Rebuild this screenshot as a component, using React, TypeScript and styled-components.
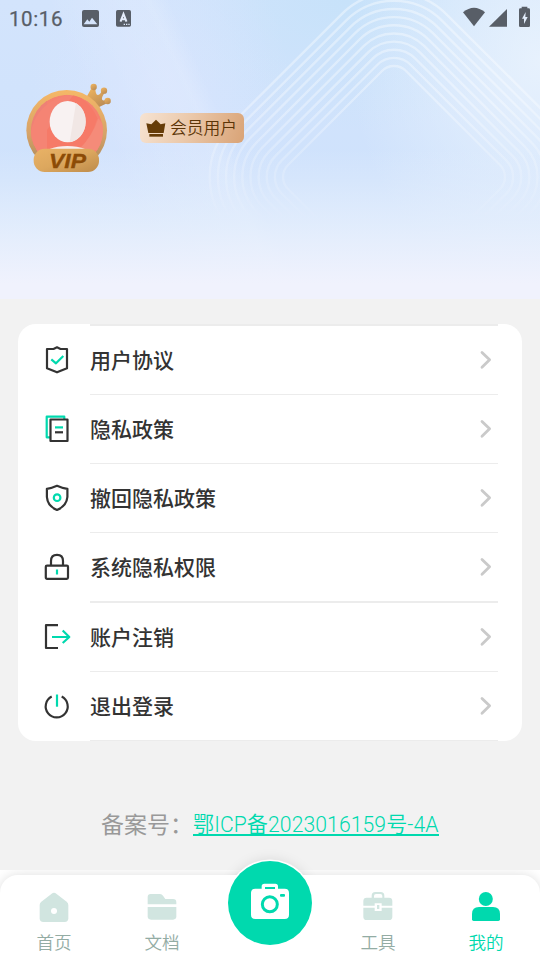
import React from "react";
import styled, { createGlobalStyle } from "styled-components";

const TEAL = "#00d9ae";
const INK = "#333333";
const PALE = "#d1e5e0";
const STATUS = "#585e67";

const GlobalStyle = createGlobalStyle`
  * { box-sizing: border-box; }
  body {
    margin: 0;
    background: #f2f2f2;
    font-family: Roboto, "Noto Sans CJK SC", sans-serif;
  }
`;

const Screen = styled.div`
  display: flex;
  flex-direction: column;
  width: 540px;
  height: 960px;
  overflow: hidden;
  background: #f2f2f2;
`;

const Hero = styled.header`
  position: relative;
  flex: none;
  height: 299px;
  overflow: hidden;
  background:
    linear-gradient(180deg, rgba(232, 240, 252, 0) 50%, rgba(230, 239, 252, 0.75) 75%, #f0f2fd 95%),
    linear-gradient(66deg, rgba(255, 255, 255, 0) 26%, rgba(255, 255, 255, 0.14) 42%, rgba(255, 255, 255, 0) 45%),
    radial-gradient(ellipse 190px 230px at 540px 60px, rgba(232, 242, 253, 0.95), rgba(232, 242, 253, 0)),
    radial-gradient(ellipse 130px 170px at 160px 90px, rgba(217, 229, 254, 0.85), rgba(217, 229, 254, 0)),
    radial-gradient(ellipse 240px 130px at 350px 0, rgba(199, 226, 250, 1), rgba(199, 226, 250, 0)),
    linear-gradient(180deg, #d3e4fc 0%, #cfe2fc 60%, #d5e6fd 100%);
`;

const Rings = styled.svg`
  position: absolute;
  inset: 0;
`;

const HeroContent = styled.div`
  position: relative;
`;

const StatusBar = styled.div`
  display: flex;
  justify-content: space-between;
  height: 40px;
`;

const Clock = styled.span`
  width: 72px;
  padding-left: 9px;
  color: ${STATUS};
  font-size: 20.5px;
  font-weight: 400;
  line-height: 38px;
  letter-spacing: 0.6px;
  -webkit-text-stroke: 0.25px ${STATUS};
`;

const StatusGroup = styled.div`
  display: flex;
`;

const Profile = styled.div`
  display: flex;
  align-items: flex-start;
  gap: 10px;
  padding: 30px 0 0 10px;
`;

const MemberBadge = styled.div`
  display: flex;
  align-items: center;
  gap: 4px;
  width: 104px;
  height: 30px;
  margin-top: 43px;
  padding-left: 6px;
  border-radius: 6px;
  background: linear-gradient(108deg, #f6e3d2 0%, #ebc9ab 45%, #d9a376 100%);
  color: #5c3507;
  font-family: "Noto Sans CJK SC", sans-serif;
  font-size: 16.8px;
  font-weight: 350;
  line-height: 27px;
  white-space: nowrap;
`;

const BadgeText = styled.span`
  padding-bottom: 2px;
`;

const Menu = styled.ul`
  flex: none;
  margin: 25px 18px 0;
  padding: 0;
  list-style: none;
  border-radius: 18px;
  background: #fff;
`;

const Divider = styled.li<{ $thick?: boolean }>`
  height: ${(p) => (p.$thick ? 2 : 1)}px;
  margin: 0 24px 0 72px;
  background: #ececec;
`;

const MenuRow = styled.li`
  display: flex;
  align-items: center;
  height: 68px;
  padding: 0 30px 0 25px;
  color: ${INK};
`;

const MenuLabel = styled.span`
  flex: 1;
  margin-left: 19px;
  padding-bottom: 2px;
  font-family: "Noto Sans CJK SC", sans-serif;
  font-size: 21px;
  font-weight: 500;
  line-height: 30px;
`;

const Filing = styled.footer`
  display: flex;
  align-items: center;
  flex: 1;
  padding: 38px 0 0 101px;
  white-space: nowrap;
`;

const FilingLabel = styled.span`
  width: 92px;
  padding-top: 3px;
  color: #999;
  font-size: 23px;
  line-height: 32px;
`;

const FilingLink = styled.a`
  height: 23px;
  border-bottom: 2px solid ${TEAL};
  color: ${TEAL};
  font-family: Roboto, "Noto Sans CJK SC", sans-serif;
  font-size: 21.15px;
  font-weight: 350;
  line-height: 24px;
  letter-spacing: 0.08px;
`;

const Dock = styled.nav`
  position: relative;
  flex: none;
  height: 90px;
`;

const DockClip = styled.div`
  height: 90px;
  padding-top: 5px;
  overflow: hidden;
  background: #fff;
`;

const TabBar = styled.div`
  display: grid;
  grid-template-columns: repeat(5, 1fr);
  height: 85px;
  border-radius: 18px 18px 0 0;
  background: #fff;
  box-shadow: 0 0 12px rgba(0, 0, 0, 0.13);
`;

const Tab = styled.div<{ $active?: boolean }>`
  display: flex;
  flex-direction: column;
  align-items: center;
  padding-top: 15px;
  color: ${(p) => (p.$active ? TEAL : "#93aca4")};
  font-family: "Noto Sans CJK SC", sans-serif;
  font-size: 17.6px;
  font-weight: 350;
  line-height: 26px;
`;

const TabIcon = styled.svg`
  display: block;
  margin-bottom: 7px;
`;

const CameraButton = styled.button`
  position: absolute;
  left: 228px;
  top: -9px;
  width: 84px;
  height: 84px;
  padding: 0;
  border: 0;
  border-radius: 50%;
  background: ${TEAL};
  box-shadow: 0 0 0 1.5px #fff;
`;

const CameraHalo = styled.div`
  position: absolute;
  left: 200px;
  top: -30px;
  width: 140px;
  height: 35px;
  overflow: hidden;

  &::before {
    content: "";
    position: absolute;
    left: 28px;
    top: 21px;
    width: 84px;
    height: 84px;
    border-radius: 50%;
    box-shadow: 0 0 14px rgba(0, 0, 0, 0.13);
  }
`;

const ringIndexes = Array.from({ length: 10 }, (_, i) => i);

function HeroRings() {
  return (
    <Rings width="540" height="299" viewBox="0 0 540 299" fill="none">
      <defs>
        <linearGradient id="ringFade" x1="0" y1="0" x2="0" y2="299" gradientUnits="userSpaceOnUse">
          <stop offset="0" stopColor="#fff" stopOpacity="0.4" />
          <stop offset="0.35" stopColor="#fff" stopOpacity="0.34" />
          <stop offset="0.6" stopColor="#fff" stopOpacity="0.17" />
          <stop offset="0.75" stopColor="#fff" stopOpacity="0" />
        </linearGradient>
        <mask id="ringMask" maskUnits="userSpaceOnUse" x="0" y="0" width="540" height="299">
          <rect width="540" height="299" fill="url(#ringFade)" />
        </mask>
      </defs>
      <g mask="url(#ringMask)" stroke="#fff" strokeWidth="2.4">
        {ringIndexes.map((i) => {
          const half = (118 + i * 10.8) / Math.SQRT2;
          return (
            <rect
              key={i}
              x={394 - half}
              y={177 - half}
              width={half * 2}
              height={half * 2}
              rx={17 + i * 6.4}
              transform="rotate(45 394 177)"
            />
          );
        })}
      </g>
    </Rings>
  );
}

function Avatar() {
  return (
    <svg width="120" height="120" viewBox="0 0 360 360">
      <defs>
        <linearGradient id="gold" x1="0" y1="0" x2="0" y2="1">
          <stop offset="0" stopColor="#f5b867" />
          <stop offset="0.55" stopColor="#d6a368" />
          <stop offset="1" stopColor="#a58457" />
        </linearGradient>
        <linearGradient id="plate" x1="0" y1="0" x2="1" y2="1">
          <stop offset="0" stopColor="#e9b266" />
          <stop offset="0.5" stopColor="#dca75e" />
          <stop offset="1" stopColor="#bd8b4a" />
        </linearGradient>
        <linearGradient id="crownGold" x1="0.2" y1="0" x2="0.8" y2="1">
          <stop offset="0" stopColor="#efb45f" />
          <stop offset="1" stopColor="#b88a55" />
        </linearGradient>
        <clipPath id="disc">
          <circle cx="171" cy="182" r="108" />
        </clipPath>
      </defs>
      <g fill="url(#crownGold)">
        <path d="M230 80 L246 52 L256 51 Q256 76 264 75 Q272 74 278 58 L286 66 Q272 84 277 90 Q281 94 293 87 L294 98 L266 112 Z" />
        <circle cx="251" cy="51" r="9.5" />
        <circle cx="282" cy="62" r="9.5" />
        <circle cx="293" cy="93" r="9.5" />
      </g>
      <circle cx="170" cy="181" r="121" fill="url(#gold)" />
      <g clipPath="url(#disc)">
        <circle cx="171" cy="182" r="108" fill="#f58270" />
        <path d="M111 80 H62 V290 H111 Z" fill="#ee8176" />
        <path d="M63 184 Q80 100 171 75 L205 80 Q110 150 111 240 L63 250 Z" fill="#f58474" />
        <path d="M190 75 Q240 90 262 145 Q245 205 205 240 H111 V180 Z" fill="#f67a68" />
        <path d="M265 145 L285 170 L270 240 H205 Q248 200 265 145 Z" fill="#f58b79" />
        <ellipse cx="172" cy="258" rx="75" ry="30" fill="#f8eeec" />
      </g>
      <ellipse cx="173" cy="155" rx="54" ry="62" fill="#f8f2f2" />
      <path d="M198 99 Q228 118 227 155 Q225 204 179 217 Z" fill="#f1e7e5" />
      <rect x="71" y="236" width="196" height="70" rx="33" fill="url(#plate)" />
      <text
        x="117"
        y="295"
        fill="#8c4b06"
        stroke="#8c4b06"
        strokeWidth="1"
        fontFamily="Liberation Sans, sans-serif"
        fontSize="60"
        fontStyle="italic"
        fontWeight="700"
        textLength="111"
        lengthAdjust="spacingAndGlyphs"
      >
        VIP
      </text>
    </svg>
  );
}

function BadgeCrown() {
  return (
    <svg width="20" height="18" viewBox="50 54 60 54" fill="#663c08">
      <path d="M51 67 L66 70 L80 56 L94 70 L108 67 L103 96 H57 Z" />
      <path d="M60 99 H101 V107 H60 Z" />
    </svg>
  );
}

function StatusLeft() {
  return (
    <svg width="68" height="40" viewBox="216 0 204 120">
      <rect x="246" y="30" width="51" height="51" rx="6" fill={STATUS} />
      <path d="M251 73 L262 58 L268 65 L276 53 L292 73 Z" fill="#d5e4fb" />
      <rect x="348" y="30" width="45" height="50" rx="5" fill={STATUS} />
      <path d="M361.500 65 L370.500 42 L379.500 65 M365 58 H376" fill="none" stroke="#e6eefc" strokeWidth="6" />
      <path d="M371 71 H375 V75 H371 Z M378 71 H382 V75 H378 Z M385 71 H389 V75 H385 Z" fill="#dfe9fc" />
    </svg>
  );
}

function StatusRight() {
  return (
    <svg width="80" height="40" viewBox="60 0 240 120" fill={STATUS}>
      <path d="M69 37 Q102 10 135 37 L102 79 Z" />
      <path d="M147 80 L201 27 V80 Z" />
      <path d="M245 25 V20 H262 V25 H266 Q270 25 270 29 V77 Q270 81 266 81 H241 Q237 81 237 77 V29 Q237 25 241 25 Z" />
      <path d="M257 36 L246 56 H252 V72 L263 51 H256 Z" fill="#e2edfb" />
    </svg>
  );
}

const menuItems: { label: string; thickAfter?: boolean; icon: React.ReactNode }[] = [
  {
    label: "用户协议",
    icon: (
      <>
        <path d="M14 1.300 L10.500 3 H4 V22.300 L14 26.300 L24 22.300 V3 H17.500 Z" />
        <path d="M8.300 13.300 L13 17.300 L20.300 10" stroke={TEAL} />
      </>
    ),
  },
  {
    label: "隐私政策",
    icon: (
      <>
        <path d="M21.300 4.300 V1.700 H3.700 V22.300 H7" stroke={TEAL} />
        <path d="M7.500 4.500 H24.500 V26 H7.500 Z" />
        <path d="M12 12.400 H20" stroke={TEAL} />
        <path d="M12 17.300 H20" />
      </>
    ),
  },
  {
    label: "撤回隐私政策",
    icon: (
      <>
        <path d="M14 1.800 Q8.500 4.300 3.900 4.800 V13 Q4.500 22 14 26 Q23.500 22 24.400 13 V4.800 Q19.500 4.300 14 1.800 Z" />
        <circle cx="14.100" cy="13.700" r="3.300" stroke={TEAL} />
      </>
    ),
  },
  {
    label: "系统隐私权限",
    thickAfter: true,
    icon: (
      <>
        <rect x="2.800" y="12.600" width="22.200" height="13.200" rx="1.200" />
        <path d="M8 12 V8 Q8 1.800 14 1.800 Q20 1.800 20 8 V12" />
        <path d="M14 16.500 V21.500" stroke={TEAL} />
      </>
    ),
  },
  {
    label: "账户注销",
    icon: (
      <>
        <path d="M15 2.200 H3 V25 H15" />
        <path d="M9 14 H26 M19.700 7.500 L26.300 14 L19.700 20" stroke={TEAL} />
      </>
    ),
  },
  {
    label: "退出登录",
    icon: (
      <>
        <path d="M8.700 4.600 A11 11 0 1 0 18.700 4.600" />
        <path d="M14 2.500 V14.700" stroke={TEAL} />
      </>
    ),
  },
];

function HomeIcon() {
  return (
    <TabIcon width="32" height="32" viewBox="113 120 96 96">
      <path
        fill={PALE}
        d="M154 131 Q161 126 168 131 L199 155 Q204 159 204 165 V205 Q204 216 193 216 H129 Q118 216 118 205 V165 Q118 159 123 155 Z"
      />
      <circle cx="161" cy="183" r="9" fill="#fff" />
    </TabIcon>
  );
}

function FolderIcon() {
  return (
    <TabIcon width="32" height="32" viewBox="437 120 96 96" fill={PALE}>
      <path d="M442 163 V141 Q442 132 451 132 H479 Q485 132 488 137 L495 147 H518 Q528 147 528 157 V163 Z" />
      <path d="M442 171 H528 V199 Q528 209 518 209 H452 Q442 209 442 199 Z" />
    </TabIcon>
  );
}

function ToolboxIcon() {
  return (
    <TabIcon width="32" height="32" viewBox="65 120 96 96" fill={PALE}>
      <path
        fillRule="evenodd"
        d="M94 143 V137 Q94 126 105 126 H121 Q132 126 132 137 V143 H146 Q156 143 156 153 V167 H124 V160 H103 V167 H69 V153 Q69 143 79 143 Z M101 143 H126 V138 Q126 132 120 132 H107 Q101 132 101 138 Z"
      />
      <path d="M69 173 H103 V183 H124 V173 H156 V200 Q156 210 146 210 H79 Q69 210 69 200 Z" />
      <rect x="110" y="165" width="7" height="12" />
    </TabIcon>
  );
}

function UserIcon() {
  return (
    <TabIcon width="32" height="32" viewBox="390 120 96 96" fill={TEAL}>
      <circle cx="437.500" cy="147" r="21" />
      <path d="M396 192 Q396 171 417 171 H459 Q480 171 480 192 V208 Q480 213 475 213 H401 Q396 213 396 208 Z" />
    </TabIcon>
  );
}

function CameraIcon() {
  return (
    <svg width="84" height="84" viewBox="84 33 252 252">
      <path
        fill="#fff"
        fillRule="evenodd"
        d="M185 116 V109 Q185 101 193 101 H226 Q234 101 234 109 V116 H254 Q267 116 267 129 V194 Q267 207 254 207 H166 Q153 207 153 194 V129 Q153 116 166 116 Z M195 117 H225 V111 H195 Z"
      />
      <circle cx="209.500" cy="163" r="22.500" fill="#fff" stroke={TEAL} strokeWidth="9" />
      <rect x="240" y="132" width="15" height="8" rx="3" fill={TEAL} />
    </svg>
  );
}

export default function App() {
  return (
    <Screen>
      <GlobalStyle />
      <Hero>
        <HeroRings />
        <HeroContent>
          <StatusBar>
            <StatusGroup>
              <Clock>10:16</Clock>
              <StatusLeft />
            </StatusGroup>
            <StatusRight />
          </StatusBar>
          <Profile>
            <Avatar />
            <MemberBadge>
              <BadgeCrown />
              <BadgeText>会员用户</BadgeText>
            </MemberBadge>
          </Profile>
        </HeroContent>
      </Hero>

      <Menu>
        <Divider $thick />
        {menuItems.map((item) => (
          <React.Fragment key={item.label}>
            <MenuRow>
              <svg width="28" height="28" viewBox="0 0 28 28" fill="none" stroke={INK} strokeWidth="2.200" strokeLinejoin="round">
                {item.icon}
              </svg>
              <MenuLabel>{item.label}</MenuLabel>
              <svg width="12" height="20" viewBox="0 0 12 20" fill="none" stroke="#cacaca" strokeWidth="2.800" strokeLinecap="round" strokeLinejoin="round">
                <path d="M2 2.400 L9.600 9.800 L2 17.200" />
              </svg>
            </MenuRow>
            <Divider $thick={item.thickAfter} />
          </React.Fragment>
        ))}
      </Menu>

      <Filing>
        <FilingLabel>备案号：</FilingLabel>
        <FilingLink>鄂ICP备2023016159号-4A</FilingLink>
      </Filing>

      <Dock>
        <CameraHalo />
        <DockClip>
          <TabBar>
            <Tab>
              <HomeIcon />
              首页
            </Tab>
            <Tab>
              <FolderIcon />
              文档
            </Tab>
            <span />
            <Tab>
              <ToolboxIcon />
              工具
            </Tab>
            <Tab $active>
              <UserIcon />
              我的
            </Tab>
          </TabBar>
        </DockClip>
        <CameraButton aria-label="拍照">
          <CameraIcon />
        </CameraButton>
      </Dock>
    </Screen>
  );
}
